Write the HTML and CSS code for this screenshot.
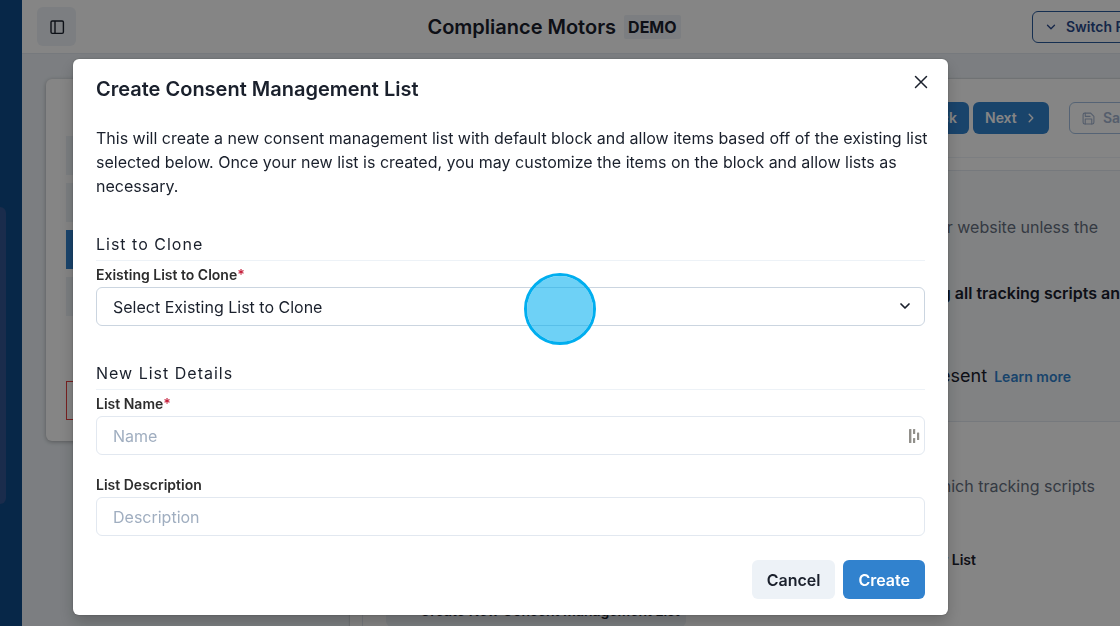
FILE: index.html
```html
<!DOCTYPE html>
<html lang="en">
<head>
<meta charset="utf-8">
<title>Compliance Motors</title>
<link rel="stylesheet" href="styles.css">
</head>
<body>
<div class="app">
  <aside class="sidebar"><div class="sidebar-group"></div></aside>
  <div class="main">
    <header class="topbar">
      <button class="toggle" aria-label="Toggle sidebar">
        <svg width="16" height="16" viewBox="0 0 16 16" fill="none" stroke="currentColor" stroke-width="1.4"><rect x="2" y="2" width="12.4" height="12.4" rx="1.3"/><path d="M6 2v12.4"/></svg>
      </button>
      <div class="brand"><span class="brand-name">Compliance Motors</span><span class="tag">DEMO</span></div>
      <button class="btn outline switch">
        <svg width="10" height="10" viewBox="0 0 10 10" fill="none" stroke="currentColor" stroke-width="1.3" stroke-linecap="round" stroke-linejoin="round"><path d="M1.5 3.2 5 6.8l3.500-3.600"/></svg>
        Switch Property
      </button>
    </header>
    <div class="content">
      <nav class="steps">
        <div class="step"></div><div class="step"></div><div class="step current"></div><div class="step"></div>
        <div class="step danger"></div>
      </nav>
      <section class="panel">
        <div class="actions">
          <button class="btn solid back">Back</button>
          <button class="btn solid next">Next
            <svg width="10" height="10" viewBox="0 0 10 10" fill="none" stroke="currentColor" stroke-width="1.4" stroke-linecap="round" stroke-linejoin="round"><path d="m3.200 1.200 3.600 3.800-3.600 3.800"/></svg>
          </button>
          <button class="btn outline save">
            <svg width="13" height="13" viewBox="0 0 24 24" fill="none" stroke="currentColor" stroke-width="2" stroke-linecap="round" stroke-linejoin="round"><path d="M19 22H5a3 3 0 0 1-3-3V5a3 3 0 0 1 3-3h11l6 6v11a3 3 0 0 1-3 3z"/><path d="M18 22v-9H6v9M6 2v6h9"/></svg>
            Save
          </button>
        </div>
        <div class="options">
          <div class="option shaded">
            <p class="muted">your website unless the</p>
            <p class="strong">blocking all tracking scripts and</p>
            <p class="present">present <a class="link" href="#">Learn more</a></p>
          </div>
          <div class="option">
            <p class="muted which">which tracking scripts</p>
            <p class="your-list">Your List</p>
            <button class="new-list">Create New Consent Management List</button>
          </div>
        </div>
      </section>
    </div>
  </div>
</div>

<div class="overlay">
  <form class="modal" role="dialog" aria-labelledby="modal-title">
    <div class="modal-head">
      <h1 id="modal-title">Create Consent Management List</h1>
      <button type="button" class="close" aria-label="Close">
        <svg width="14" height="14" viewBox="0 0 14 14" fill="none" stroke="currentColor" stroke-width="1.5" stroke-linecap="round"><path d="m1.500 1.500 11 11M12.500 1.500l-11 11"/></svg>
      </button>
    </div>
    <p class="intro">This will create a new consent management list with default block and allow items based off of the existing list selected below. Once your new list is created, you may customize the items on the block and allow lists as necessary.</p>
    <h2>List to Clone</h2>
    <div class="field">
      <label for="existing">Existing List to Clone<span class="req">*</span></label>
      <div class="control">
        <select id="existing" class="dark"><option>Select Existing List to Clone</option></select>
        <svg class="chevron" width="12" height="12" viewBox="0 0 12 12" fill="none" stroke="currentColor" stroke-width="1.700" stroke-linecap="round" stroke-linejoin="round"><path d="m2 4 4 4 4-4"/></svg>
        <span class="pointer"></span>
      </div>
    </div>
    <h2>New List Details</h2>
    <div class="field">
      <label for="name">List Name<span class="req">*</span></label>
      <div class="control">
        <input id="name" type="text" placeholder="Name">
        <svg class="manager" width="12" height="16" viewBox="0 0 12 16" fill="#918f8a"><rect x="1" y="1" width="2.400" height="14" rx=".6"/><rect x="5" y="1" width="2.200" height="5" rx=".6"/><rect x="5" y="10" width="2.200" height="5" rx=".6"/><rect x="9" y="4.500" width="2.200" height="7.500" rx=".6"/></svg>
      </div>
    </div>
    <div class="field last">
      <label for="description">List Description</label>
      <div class="control"><input id="description" type="text" placeholder="Description"></div>
    </div>
    <div class="modal-foot">
      <button type="button" class="cancel">Cancel</button>
      <button type="submit" class="create">Create</button>
    </div>
  </form>
</div>
</body>
</html>
```
FILE: styles.css
```css
* { box-sizing: border-box; }
body {
  margin: 0;
  overflow: hidden;
  font-family: Inter, "Liberation Sans", sans-serif;
  font-size: 16px;
  line-height: 24px;
  color: #1a202c;
}
h1, h2, p { margin: 0; }
button, input, select { font: inherit; color: inherit; }
button { border: 0; cursor: pointer; white-space: nowrap; }

.app { display: flex; width: calc(100% + 88px); height: 100vh; overflow: hidden; background: #edf2f7; }
.sidebar { flex: none; width: 22px; padding-top: 207px; background: #0f4c8a; }
.sidebar-group { width: 6px; height: 297px; border-radius: 0 6px 6px 0; background: #335592; }
.main { flex: 1; min-width: 0; }

.topbar { display: flex; align-items: center; height: 54px; padding: 0 16px 0 15px; background: #fff; border-bottom: 1px solid #e2e8f0; }
.toggle { display: grid; place-items: center; width: 39px; height: 39px; padding: 0; border-radius: 6px; background: #edf2f7; }
.brand { flex: 1; display: flex; align-items: center; justify-content: center; gap: 8px; font-size: 20px; font-weight: 600; }
.tag { padding: 0 4px; border-radius: 2px; background: #edf2f7; font-size: 16px; font-weight: 700; }

.btn { display: inline-flex; align-items: center; height: 32px; padding: 0 12px; border-radius: 6px; font-size: 14px; font-weight: 600; }
.outline { border: 1px solid #2a5a9c; background: transparent; color: #2a4a8c; }
.switch { width: 160px; gap: 10px; padding-left: 13px; }
.solid { background: #3182ce; color: #fff; }
.next { width: 76px; justify-content: space-between; }
.next svg { margin-right: 1px; }
.save { width: 84px; gap: 8px; margin-left: 16px; border-color: #a3bfe0; color: #a3b4d0; }

.content { display: flex; align-items: flex-start; padding: 25px 0 0 24px; }
.steps { display: flex; flex-direction: column; gap: 8px; width: 292px; height: 362px; margin-right: 12px; padding: 57px 20px 21px; border-radius: 6px; background: #fff; box-shadow: 0 1px 4px rgba(0, 0, 0, .3); }
.step { height: 39px; background: #edf2f7; }
.current { background: #3182ce; }
.danger { margin-top: auto; border: 1px solid #e53e3e; background: #fff; }

.panel { flex: 1; padding-left: 12px; background: #fff; box-shadow: 0 0 2px rgba(0, 0, 0, .3); }
.actions { display: flex; justify-content: flex-end; gap: 4px; height: 79px; padding: 23px 55px 24px 0; border-bottom: 1px solid #edf2f7; }
.options { margin-top: 12px; border: 1px solid #e2e8f0; }
.option { padding: 52px 109px 0 23px; text-align: right; }
.shaded { padding-top: 44px; padding-bottom: 32px; background: #f7fafc; border-bottom: 1px solid #e2e8f0; }
.muted { color: #667080; }
.strong { margin: 42px -32px 59px 0; font-weight: 600; }
.present { padding-right: 27px; font-size: 18px; }
.link { margin-left: 2px; color: #3182ce; font-size: 14px; font-weight: 600; text-decoration: none; }
.which { padding-right: 3px; }
.your-list { margin-top: 50px; padding-right: 122px; font-size: 14px; font-weight: 600; }
.new-list { display: block; width: 300px; height: 32px; margin-top: 23px; padding: 0 10px 0 34px; border-radius: 6px; background: #edf2f7; font-size: 14px; font-weight: 600; text-align: left; }

.overlay { position: fixed; inset: 0; padding: 59px 172px 12px 73px; background: rgba(0, 0, 0, .48); }
.modal { padding: 16px 23px; border-radius: 6px; background: #fff; box-shadow: 0 8px 16px rgba(0, 0, 0, .2), 0 0 2px rgba(0, 0, 0, .3); }
.modal-head { display: flex; justify-content: space-between; }
.modal-head h1 { font-size: 20px; font-weight: 600; line-height: 28px; }
.close { display: grid; place-items: center; width: 30px; height: 30px; margin: -8px -11px 0 0; padding: 0; background: transparent; }
.intro { margin: 23px -12px 0 0; }
h2 { margin-top: 34px; padding-bottom: 4px; border-bottom: 1px solid #edf2f7; font-size: 16px; font-weight: 400; letter-spacing: 1px; }
.field { margin-top: 4px; padding-bottom: 1px; }
.field label { display: block; margin-bottom: 2px; font-size: 14px; font-weight: 600; line-height: 20px; color: #2d2d2d; }
.req { color: #c41e3a; }
.control { position: relative; }
.control input, .control select { display: block; width: 100%; height: 39px; padding: 0 16px; border: 1px solid #e2e8f0; border-radius: 6px; background: #fff; appearance: none; }
.control input::placeholder { color: #a0aec0; opacity: 1; }
.control .dark { border-color: #cbd5e0; }
.chevron { position: absolute; right: 14px; top: 13px; pointer-events: none; }
.manager { position: absolute; right: 5px; top: 12px; }
.pointer { position: absolute; left: calc(50% + 13px); top: -14px; width: 72px; height: 72px; border: 3px solid #00aeef; border-radius: 50%; background: rgba(0, 174, 239, .57); background-clip: padding-box; }
.last { margin-top: 19px; }
.modal-foot { display: flex; justify-content: flex-end; gap: 8px; margin-top: 23px; }
.modal-foot button { height: 39px; padding: 0 15px; border-radius: 6px; font-weight: 600; }
.cancel { background: #edf2f7; }
.modal-foot .create { background: #3182ce; color: #fff; }
```
